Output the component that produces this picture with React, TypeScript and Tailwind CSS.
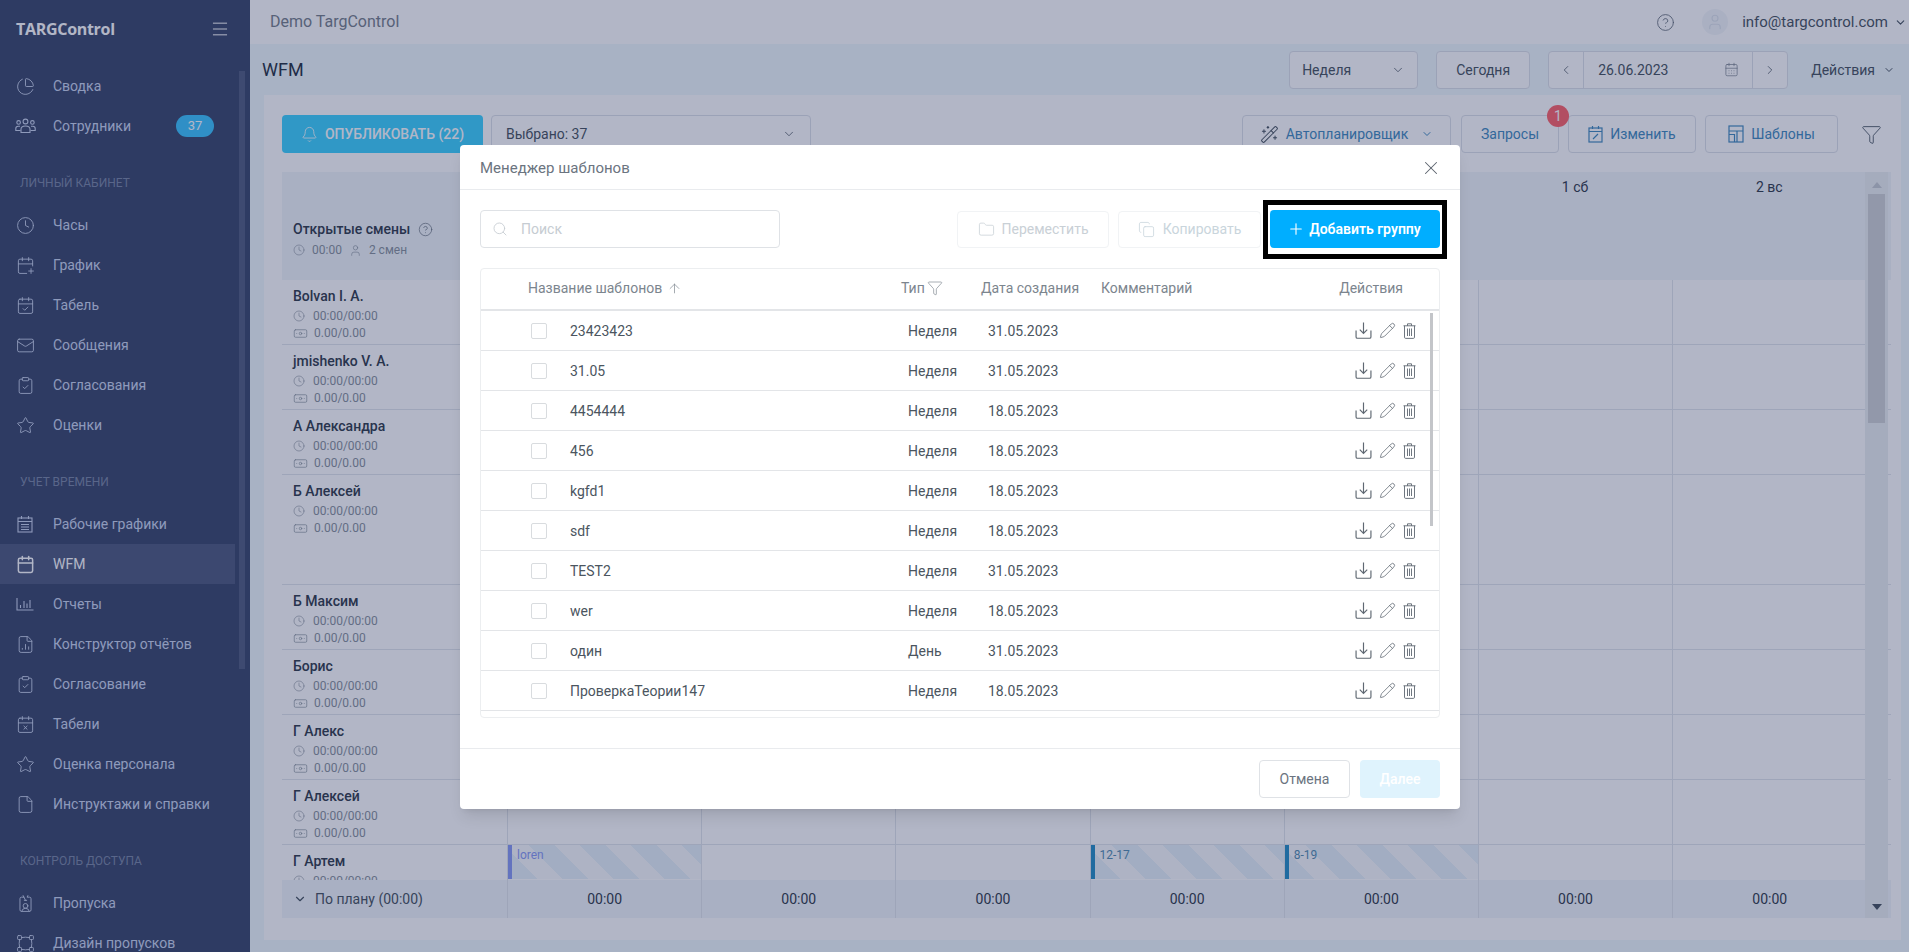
import {
  ArrowUp,
  Banknote,
  Bell,
  Calendar,
  CalendarCheck,
  CalendarDays,
  CalendarPlus,
  CalendarX,
  ChartPie,
  ChevronDown,
  ChevronLeft,
  ChevronRight,
  CircleHelp,
  ClipboardCheck,
  Clock,
  Copy,
  File,
  FileChartColumn,
  Filter,
  Folder,
  IdCardLanyard,
  Mail,
  Menu,
  Pencil,
  Plus,
  Search,
  Star,
  User,
  VectorSquare,
  WandSparkles,
  X,
} from 'lucide-react';
import type { ReactNode } from 'react';

function UsersIcon() {
  return (
    <svg width="21" height="16" viewBox="0 0 21 16" fill="none" stroke="currentColor" strokeWidth="1.1">
      <circle cx="10.5" cy="3.5" r="2.4" />
      <circle cx="3.6" cy="4.4" r="1.8" />
      <circle cx="17.4" cy="4.4" r="1.8" />
      <path d="M6 14.5v-3.2c0-2 1.8-3.3 4.5-3.3s4.5 1.3 4.5 3.3v3.2z" />
      <path d="M5 8.2H3.2C1.7 8.2.8 9.2.8 10.500V12.500H5.500" />
      <path d="M16 8.200h1.800c1.500 0 2.400 1 2.400 2.300v2h-4.700" />
    </svg>
  );
}

function BarsIcon() {
  return (
    <svg width="18" height="14" viewBox="0 0 18 14" fill="none" stroke="currentColor" strokeWidth="1.1">
      <path d="M1 1v12h16.500" />
      <path d="M4.500 11V8M8 11V4M11 11V6.500M14 11V3" />
    </svg>
  );
}

function CalendarLinesIcon() {
  return (
    <svg width="16" height="18" viewBox="0 0 16 18" fill="none" stroke="currentColor" strokeWidth="1.1">
      <rect x="1" y="3" width="14" height="14" />
      <path d="M4.500 1v3M11.500 1v3M1 6.500h14M4 9.500h8M4 12h8M4 14.500h8" />
    </svg>
  );
}

function DownloadIcon() {
  return (
    <svg width="17" height="17" viewBox="0 0 16 16" fill="none" stroke="currentColor" strokeWidth="1.1">
      <path d="M8 .5v10M4.500 7.200 8 10.700l3.500-3.500" />
      <path d="M1 8v6c0 .8.500 1.300 1.300 1.300h11.400c.8 0 1.300-.5 1.300-1.300V8" />
    </svg>
  );
}

function TrashIcon() {
  return (
    <svg width="13" height="16" viewBox="0 0 13 16" fill="none" stroke="currentColor" strokeWidth="0.9">
      <path d="M.5 2.800h12M4.500 2.800V.8h4v2" />
      <path d="M1.500 2.800v11.400c0 .7.400 1.200 1.100 1.200h7.800c.7 0 1.100-.5 1.100-1.200V2.800" />
      <path d="M4.500 5.500v7.500M6.500 5.500v7.500M8.500 5.500v7.500" />
    </svg>
  );
}

function CalendarEditIcon() {
  return (
    <svg width="15" height="18" viewBox="0 0 15 18" fill="none" stroke="currentColor" strokeWidth="1.2">
      <rect x="1" y="3" width="13" height="14" />
      <path d="M4.500 1v3M10.500 1v3M1 6.500h13M5 14l5-5" />
    </svg>
  );
}

function TemplatesIcon() {
  return (
    <svg width="16" height="18" viewBox="0 0 16 18" fill="none" stroke="currentColor" strokeWidth="1.2">
      <rect x="1" y="1" width="14" height="16" />
      <path d="M1 6h14M9 6v11M1 9.500h5.500v7.500" />
    </svg>
  );
}

const iconProps = { size: 19, strokeWidth: 1.15 };

type NavItem = { label: string; icon: ReactNode; active?: boolean; badge?: string };

const navTop: NavItem[] = [
  { label: 'Сводка', icon: <ChartPie {...iconProps} /> },
  { label: 'Сотрудники', icon: <UsersIcon />, badge: '37' },
];

const navPersonal: NavItem[] = [
  { label: 'Часы', icon: <Clock {...iconProps} /> },
  { label: 'График', icon: <CalendarPlus {...iconProps} /> },
  { label: 'Табель', icon: <CalendarCheck {...iconProps} /> },
  { label: 'Сообщения', icon: <Mail {...iconProps} /> },
  { label: 'Согласования', icon: <ClipboardCheck {...iconProps} /> },
  { label: 'Оценки', icon: <Star {...iconProps} /> },
];

const navTime: NavItem[] = [
  { label: 'Рабочие графики', icon: <CalendarLinesIcon /> },
  { label: 'WFM', icon: <Calendar size={19} strokeWidth={1.9} />, active: true },
  { label: 'Отчеты', icon: <BarsIcon /> },
  { label: 'Конструктор отчётов', icon: <FileChartColumn {...iconProps} /> },
  { label: 'Согласование', icon: <ClipboardCheck {...iconProps} /> },
  { label: 'Табели', icon: <CalendarX {...iconProps} /> },
  { label: 'Оценка персонала', icon: <Star {...iconProps} /> },
  { label: 'Инструктажи и справки', icon: <File {...iconProps} /> },
];

const navAccess: NavItem[] = [
  { label: 'Пропуска', icon: <IdCardLanyard {...iconProps} /> },
  { label: 'Дизайн пропусков', icon: <VectorSquare {...iconProps} /> },
];

const staff = [
  { name: 'Bolvan I. A.', h: 'h-[65px]' },
  { name: 'jmishenko V. A.', h: 'h-[65px]' },
  { name: 'А Александра', h: 'h-[65px]' },
  { name: 'Б Алексей', h: 'h-[110px]' },
  { name: 'Б Максим', h: 'h-[65px]' },
  { name: 'Борис', h: 'h-[65px]' },
  { name: 'Г Алекс', h: 'h-[65px]' },
  { name: 'Г Алексей', h: 'h-[65px]' },
];

const days = ['26 пн', '27 вт', '28 ср', '29 чт', '30 пт', '1 сб', '2 вс'];

const templates = [
  { name: '23423423', type: 'Неделя', date: '31.05.2023' },
  { name: '31.05', type: 'Неделя', date: '31.05.2023' },
  { name: '4454444', type: 'Неделя', date: '18.05.2023' },
  { name: '456', type: 'Неделя', date: '18.05.2023' },
  { name: 'kgfd1', type: 'Неделя', date: '18.05.2023' },
  { name: 'sdf', type: 'Неделя', date: '18.05.2023' },
  { name: 'TEST2', type: 'Неделя', date: '31.05.2023' },
  { name: 'wer', type: 'Неделя', date: '18.05.2023' },
  { name: 'один', type: 'День', date: '31.05.2023' },
  { name: 'ПроверкаТеории147', type: 'Неделя', date: '18.05.2023' },
];

function NavRow({ item }: { item: NavItem }) {
  return (
    <div
      className={`flex h-10 w-[235px] shrink-0 items-center text-sm ${
        item.active ? 'bg-[#566284] text-white' : 'text-[#ccd7ef]'
      }`}
    >
      <span className="flex w-[53px] shrink-0 justify-center pl-[5px] pr-[8px]">{item.icon}</span>
      <span>{item.label}</span>
      {item.badge && (
        <span className="ml-auto mr-[21px] flex h-[22px] w-[38px] items-center justify-center rounded-full bg-[#45c8ff] text-[13px] text-white">
          {item.badge}
        </span>
      )}
    </div>
  );
}

function NavHeading({ children }: { children: ReactNode }) {
  return (
    <div className="h-[59px] shrink-0 pl-5 pt-[29px] text-xs leading-4 text-[#808da9] uppercase">{children}</div>
  );
}

function Sidebar() {
  return (
    <aside className="relative flex h-full w-[250px] shrink-0 flex-col overflow-hidden bg-[#434f71]">
      <div className="flex h-[66px] shrink-0 items-start justify-between pl-4 pr-5 pt-[18px]">
        <span className="font-['Open_Sans'] text-[16px] leading-[22px] font-bold tracking-[-0.3px] text-white">
          TARGControl
        </span>
        <Menu size={20} strokeWidth={1.2} className="mt-[1px] text-white" />
      </div>
      {navTop.map((item) => (
        <NavRow key={item.label} item={item} />
      ))}
      <NavHeading>Личный кабинет</NavHeading>
      {navPersonal.map((item) => (
        <NavRow key={item.label} item={item} />
      ))}
      <NavHeading>Учет времени</NavHeading>
      {navTime.map((item) => (
        <NavRow key={item.label} item={item} />
      ))}
      <NavHeading>Контроль доступа</NavHeading>
      {navAccess.map((item) => (
        <NavRow key={item.label} item={item} />
      ))}
      {/* sidebar scrollbar */}
      <div className="absolute left-[239px] top-[71px] h-[598px] w-[6px] bg-[#5a6586]" />
    </aside>
  );
}

function OutlineButton({
  children,
  className = '',
  color = 'text-[#4f5b66]',
}: {
  children: ReactNode;
  className?: string;
  color?: string;
}) {
  return (
    <div
      className={`flex h-[38px] shrink-0 items-center justify-center rounded border border-[#dfe3ea] bg-white text-sm ${color} ${className}`}
    >
      {children}
    </div>
  );
}

function TopBar() {
  return (
    <>
      <header className="flex h-[44px] shrink-0 items-center bg-white pl-[20px] pr-[2px]">
        <span className="text-[16px] text-[#7d8690]">Demo TargControl</span>
        <CircleHelp size={19} strokeWidth={1.1} className="ml-auto text-[#6c7680]" />
        <span className="ml-[27px] flex h-[26px] w-[26px] items-center justify-center rounded-full bg-[#f4f7fa]">
          <User size={18} strokeWidth={1.5} className="text-[#dfe5ec]" />
        </span>
        <span className="ml-[14px] text-[15px] text-[#4f5b66]">info@targcontrol.com</span>
        <ChevronDown size={13} className="ml-[6px] text-[#4f5b66]" />
      </header>
      <div className="flex h-[51px] shrink-0 items-center pl-[12px] pr-[14px]">
        <span className="text-[18px] text-[#2f3a4a]">WFM</span>
        <OutlineButton className="ml-auto w-[129px] justify-between! px-[12px]">
          Неделя
          <ChevronDown size={14} strokeWidth={1.3} />
        </OutlineButton>
        <OutlineButton className="ml-[18px] w-[94px]">Сегодня</OutlineButton>
        <div className="ml-[18px] flex h-[38px] w-[240px] items-center rounded border border-[#dfe3ea] bg-white text-sm text-[#4f5b66]">
          <span className="flex h-full w-[35px] items-center justify-center border-r border-[#dfe3ea]">
            <ChevronLeft size={14} strokeWidth={1.3} />
          </span>
          <span className="flex-1 pl-[14px]">26.06.2023</span>
          <CalendarDays size={15} strokeWidth={1.1} className="mr-[13px] text-[#7a838d]" />
          <span className="flex h-full w-[35px] items-center justify-center border-l border-[#dfe3ea]">
            <ChevronRight size={14} strokeWidth={1.3} />
          </span>
        </div>
        <span className="ml-[23px] text-sm text-[#4f5b66]">Действия</span>
        <ChevronDown size={12} className="ml-[8px] text-[#4f5b66]" />
      </div>
    </>
  );
}

function Toolbar() {
  const blue = 'text-[#4a90c2]';
  return (
    <div className="flex h-[38px] shrink-0 items-center">
      <div className="flex h-[38px] w-[201px] items-center justify-center gap-[7px] rounded bg-[#45d4ff] text-sm font-medium text-white">
        <Bell size={17} strokeWidth={1.2} />
        ОПУБЛИКОВАТЬ (22)
      </div>
      <OutlineButton className="ml-[8px] w-[320px] justify-between! pl-[14px] pr-[14px]">
        Выбрано: 37
        <ChevronDown size={14} strokeWidth={1.3} />
      </OutlineButton>
      <OutlineButton className="ml-auto w-[209px] gap-[7px]" color={blue}>
        <WandSparkles size={19} strokeWidth={1.3} className="text-[#4f5b66]" />
        Автопланировщик
        <ChevronDown size={12} className="ml-[6px]" />
      </OutlineButton>
      <OutlineButton className="relative ml-[10px] w-[98px]" color={blue}>
        Запросы
        <span className="absolute left-[85px] top-[-11px] flex h-[22px] w-[22px] items-center justify-center rounded-full bg-[#ff6a70] text-sm text-white">
          1
        </span>
      </OutlineButton>
      <OutlineButton className="ml-[9px] w-[128px] gap-[7px]" color={blue}>
        <CalendarEditIcon />
        Изменить
      </OutlineButton>
      <OutlineButton className="ml-[9px] w-[133px] gap-[7px]" color={blue}>
        <TemplatesIcon />
        Шаблоны
      </OutlineButton>
      <Filter size={21} strokeWidth={1} className="ml-[23px] mr-[9px] text-[#4f5b66]" />
    </div>
  );
}

function StaffSub() {
  return (
    <div className="mt-[4px] flex flex-col gap-[1px] text-xs leading-4 text-[#8e97a1]">
      <div className="flex items-center gap-[8px]">
        <Clock size={12} strokeWidth={1.2} />
        00:00/00:00
      </div>
      <div className="flex items-center gap-[6px]">
        <Banknote size={15} strokeWidth={1.1} />
        0.00/0.00
      </div>
    </div>
  );
}

function DayCells({ shifts }: { shifts?: boolean }) {
  const hatched =
    'bg-[repeating-linear-gradient(45deg,#e8f3fa_0,#e8f3fa_18px,#f9fbfd_18px,#f9fbfd_36px)]';
  return (
    <>
      {days.map((d, i) => {
        const shift = shifts ? { 0: 'loren', 3: '12-17', 4: '8-19' }[i] : undefined;
        return (
          <div key={d} className="h-full w-[194.2px] shrink-0 border-l border-[#e2e7ec]">
            {shift && (
              <div
                className={`flex h-[34px] border-l-[4px] pl-[5px] text-xs leading-5 ${hatched} ${
                  i === 0 ? 'border-[#8fa0f5] text-[#8fa0f5]' : 'border-[#2f94c9] text-[#5c93b5]'
                }`}
              >
                {shift}
              </div>
            )}
          </div>
        );
      })}
    </>
  );
}

function Board() {
  return (
    <div className="relative mt-[19px] flex h-[746px] shrink-0 flex-col overflow-hidden">
      {/* scrolled rows, clipped by the totals row */}
      <div className="min-h-0 flex-1 overflow-hidden">
        <div className="flex h-[108px] shrink-0 bg-[#f3f7fa]">
          <div className="w-[225px] shrink-0 pl-[11px] pt-[49px]">
            <div className="flex items-center gap-[8px] text-sm leading-4 font-medium text-[#3a4552]">
              Открытые смены
              <CircleHelp size={15} strokeWidth={1.1} className="text-[#6c7680]" />
            </div>
            <div className="mt-[5px] flex items-center gap-[7px] text-xs leading-4 text-[#8e97a1]">
              <Clock size={12} strokeWidth={1.2} />
              00:00
              <User size={13} strokeWidth={1.2} />2 смен
            </div>
          </div>
          {days.map((d) => (
            <div key={d} className="w-[194.2px] shrink-0 pt-[6px] text-center text-sm leading-[18px] text-[#3a4552]">
              {d}
            </div>
          ))}
        </div>
        {staff.map((s) => (
          <div key={s.name} className={`flex shrink-0 border-b border-[#e2e7ec] ${s.h}`}>
            <div className="w-[225px] shrink-0 pl-[11px] pt-[8px]">
              <div className="text-sm leading-4 font-medium text-[#3a4552]">{s.name}</div>
              <StaffSub />
            </div>
            <DayCells />
          </div>
        ))}
        <div className="flex h-[60px] shrink-0">
          <div className="w-[225px] shrink-0 pl-[11px] pt-[8px]">
            <div className="text-sm leading-4 font-medium text-[#3a4552]">Г Артем</div>
            <StaffSub />
          </div>
          <DayCells shifts />
        </div>
      </div>
      {/* totals row */}
      <div className="flex h-[38px] shrink-0 items-center bg-[#f3f7fb]">
        <div className="flex w-[225px] shrink-0 items-center gap-[8px] pl-[11px] text-sm text-[#4f5b66]">
          <ChevronDown size={14} strokeWidth={2} />
          По плану (00:00)
        </div>
        {days.map((d) => (
          <div
            key={d}
            className="flex h-full w-[194.2px] shrink-0 items-center justify-center border-l border-[#e2e7ec] text-sm text-[#3a4552]"
          >
            00:00
          </div>
        ))}
      </div>
      {/* page scrollbar */}
      <div className="absolute bottom-0 right-[3px] top-0 flex w-[23px] flex-col items-center bg-[#edf1f3] pt-[10px]">
        <span className="h-0 w-0 border-x-[5px] border-b-[6px] border-x-transparent border-b-[#c9ced4]" />
        <span className="mt-[6px] h-[229px] w-[17px] bg-[#d2d5d7]" />
        <span className="mb-[8px] mt-auto h-0 w-0 border-x-[5px] border-t-[6px] border-x-transparent border-t-[#4f5b66]" />
      </div>
    </div>
  );
}

function TemplateRow({ name, type, date }: { name: string; type: string; date: string }) {
  return (
    <div className="flex h-10 items-center border-b border-[#e3e5e8] pl-[50px] text-sm text-[#4b5560]">
      <span className="h-4 w-4 shrink-0 rounded-[2px] border border-[#d9dcdf]" />
      <span className="ml-[23px] w-[338px] shrink-0">{name}</span>
      <span className="w-[80px] shrink-0">{type}</span>
      <span className="flex-1">{date}</span>
      <span className="mr-[23px] flex items-center gap-[7px] text-[#5f6872]">
        <DownloadIcon />
        <Pencil size={17} strokeWidth={1.1} />
        <TrashIcon />
      </span>
    </div>
  );
}

function TemplateModal() {
  return (
    <div className="absolute left-[460px] top-[145px] flex h-[664px] w-[1000px] flex-col rounded-[4px] bg-white shadow-lg">
      <div className="flex h-[45px] shrink-0 items-center justify-between border-b border-[#e9ebee] pl-5 pr-[18px] pt-[2px]">
        <span className="text-[15px] text-[#6b7480]">Менеджер шаблонов</span>
        <X size={22} strokeWidth={1.1} className="text-[#5a636d]" />
      </div>
      <div className="flex flex-1 flex-col overflow-hidden px-5 pt-[20px]">
        <div className="flex h-[38px] shrink-0 items-center">
          <div className="flex h-[38px] w-[300px] items-center rounded border border-[#dfe2e6] pl-[11px] text-sm text-[#c6ccd2]">
            <Search size={16} strokeWidth={1.3} className="mr-[13px]" />
            Поиск
          </div>
          <div className="ml-auto flex h-[37px] w-[152px] items-center justify-center gap-[7px] rounded border border-[#f1f3f5] text-sm text-[#c9d0d6]">
            <Folder size={17} strokeWidth={1.1} />
            Переместить
          </div>
          <div className="ml-[9px] flex h-[37px] w-[143px] items-center justify-center gap-[8px] rounded border border-[#f1f3f5] text-sm text-[#c9d5dc]">
            <Copy size={17} strokeWidth={1.1} />
            Копировать
          </div>
          {/* black highlight frame around the button */}
          <div className="relative ml-[9px] flex h-[38px] w-[170px] items-center justify-center gap-[4px] rounded bg-[#00aeff] pr-[2px] text-sm font-semibold text-white">
            <span className="absolute -inset-x-[7px] -bottom-[11px] -top-[10px] border-[5px] border-black" />
            <Plus size={18} strokeWidth={1.5} />
            Добавить группу
          </div>
        </div>
        <div className="mt-[20px] h-[450px] shrink-0 overflow-hidden rounded-[4px] border border-[#eceef0]">
          <div className="flex h-[42px] items-center border-b-2 border-[#e3e5e8] pb-[2px] text-sm text-[#7c858e]">
            <span className="ml-[47px] flex w-[373px] shrink-0 items-center gap-[5px]">
              Название шаблонов
              <ArrowUp size={15} strokeWidth={1.1} />
            </span>
            <span className="flex w-[80px] shrink-0 items-center gap-[2px]">
              Тип
              <Filter size={16} strokeWidth={1} />
            </span>
            <span className="w-[120px] shrink-0">Дата создания</span>
            <span className="flex-1">Комментарий</span>
            <span className="mr-[36px]">Действия</span>
          </div>
          <div className="relative">
            {templates.map((t) => (
              <TemplateRow key={t.name} {...t} />
            ))}
            <div className="absolute right-[6px] top-[2px] h-[213px] w-[3px] bg-[#c3c5c9]" />
          </div>
        </div>
      </div>
      <div className="flex h-[61px] shrink-0 items-center justify-end gap-[10px] border-t border-[#e9ebee] pr-5">
        <div className="flex h-[38px] w-[91px] items-center justify-center rounded border border-[#dfe2e6] text-sm text-[#6b7480]">
          Отмена
        </div>
        <div className="flex h-[38px] w-[80px] items-center justify-center rounded bg-[#dff3fd] text-sm font-medium text-white">
          Далее
        </div>
      </div>
    </div>
  );
}

export default function App() {
  return (
    <div className="relative flex h-[952px] w-[1909px] overflow-hidden bg-[#f1f9fc] font-['Roboto',sans-serif]">
      <Sidebar />
      <main className="flex min-w-0 flex-1 flex-col">
        <TopBar />
        <div className="ml-[14px] mr-[8px] flex h-[845px] shrink-0 flex-col bg-white pl-[18px] pr-[10px] pt-[20px]">
          <Toolbar />
          <Board />
        </div>
      </main>
      {/* modal backdrop */}
      <div className="absolute inset-0 bg-[rgba(0,12,65,0.3)]" />
      <TemplateModal />
    </div>
  );
}
